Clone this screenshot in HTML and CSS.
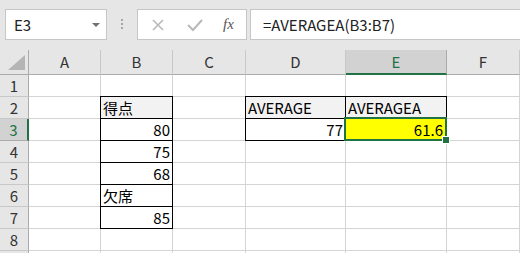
FILE: index.html
```html
<!DOCTYPE html>
<html lang="ja">
<head>
    <title>AVERAGEA</title>
    <meta charset="UTF-8">
    <link rel="stylesheet" href="styles.css">
</head>
<body>
    <div class="toolbar">
        <div class="namebox">
            <span>E3</span>
            <span class="arrow"></span>
        </div>
        <div class="dots"><i></i><i></i><i></i></div>
        <div class="buttons">
            <svg class="btn" width="14" height="14" viewBox="0 0 14 14"><path d="M2 2 L12 12 M12 2 L2 12" stroke="#b9b9b9" stroke-width="1.6" fill="none"/></svg>
            <svg class="btn" width="16" height="14" viewBox="0 0 16 14"><path d="M1 7 L6 12 L15 2" stroke="#b9b9b9" stroke-width="2" fill="none"/></svg>
            <span class="fx">fx</span>
        </div>
        <div class="formula">=AVERAGEA(B3:B7)</div>
    </div>

    <div class="sheet">
        <div class="corner"><span></span></div>
        <div class="colhead">A</div>
        <div class="colhead">B</div>
        <div class="colhead">C</div>
        <div class="colhead">D</div>
        <div class="colhead active">E</div>
        <div class="colhead">F</div>

        <div class="rowhead">1</div>
        <div class="cell"></div><div class="cell"></div><div class="cell"></div><div class="cell"></div><div class="cell"></div><div class="cell"></div>

        <div class="rowhead">2</div>
        <div class="cell"></div>
        <div class="cell boxed title">得点</div>
        <div class="cell"></div>
        <div class="cell boxed title">AVERAGE</div>
        <div class="cell boxed title">AVERAGEA</div>
        <div class="cell"></div>

        <div class="rowhead active">3</div>
        <div class="cell"></div>
        <div class="cell boxed num">80</div>
        <div class="cell"></div>
        <div class="cell boxed num">77</div>
        <div class="cell boxed num selected">61.6</div>
        <div class="cell"></div>

        <div class="rowhead">4</div>
        <div class="cell"></div>
        <div class="cell boxed num">75</div>
        <div class="cell"></div><div class="cell"></div><div class="cell"></div><div class="cell"></div>

        <div class="rowhead">5</div>
        <div class="cell"></div>
        <div class="cell boxed num">68</div>
        <div class="cell"></div><div class="cell"></div><div class="cell"></div><div class="cell"></div>

        <div class="rowhead">6</div>
        <div class="cell"></div>
        <div class="cell boxed">欠席</div>
        <div class="cell"></div><div class="cell"></div><div class="cell"></div><div class="cell"></div>

        <div class="rowhead">7</div>
        <div class="cell"></div>
        <div class="cell boxed num">85</div>
        <div class="cell"></div><div class="cell"></div><div class="cell"></div><div class="cell"></div>

        <div class="rowhead">8</div>
        <div class="cell"></div><div class="cell"></div><div class="cell"></div><div class="cell"></div><div class="cell"></div><div class="cell"></div>

        <div class="rowhead"></div>
        <div class="cell"></div><div class="cell"></div><div class="cell"></div><div class="cell"></div><div class="cell"></div><div class="cell"></div>
    </div>
</body>
</html>
```

FILE: styles.css
```css
* {
    box-sizing: border-box;
}

body {
    margin: 0;
    height: 253px;
    overflow: hidden;
    background: #fff;
    font-family: "Noto Sans CJK JP", "Liberation Sans", sans-serif;
    color: #000;
}

/* formula bar */
.toolbar {
    display: flex;
    align-items: flex-start;
    height: 50px;
    padding: 9px 0 0 5px;
    background: #e6e6e6;
}

.namebox {
    display: flex;
    align-items: center;
    justify-content: space-between;
    width: 102px;
    height: 31px;
    padding: 0 6px 0 8px;
    background: #fff;
    border: 1px solid #c6c6c6;
    font-size: 15px;
    color: #222;
}

.arrow {
    width: 0;
    height: 0;
    border-left: 4px solid transparent;
    border-right: 4px solid transparent;
    border-top: 4px solid #707070;
}

.dots {
    display: flex;
    flex-direction: column;
    gap: 2px;
    margin: 10px 14px 0 14px;
}

.dots i {
    display: block;
    width: 2px;
    height: 2px;
    background: #a6a6a6;
}

.buttons {
    display: flex;
    align-items: center;
    width: 110px;
    height: 31px;
    margin-right: 3px;
    padding-left: 13px;
    background: #fff;
    border: 1px solid #c6c6c6;
}

.btn {
    margin-right: 22px;
}

.fx {
    font-family: "Liberation Serif", serif;
    font-style: italic;
    font-size: 15px;
    color: #555;
    margin-left: -2px;
}

.formula {
    flex: 1;
    height: 31px;
    margin-right: -10px;
    padding-left: 12px;
    background: #fff;
    border: 1px solid #c6c6c6;
    font-size: 15px;
    line-height: 29px;
    color: #222;
}

/* grid */
.sheet {
    display: grid;
    grid-template-columns: 29px 72px 72px 73px 100px 101px 73px;
    grid-template-rows: 25px repeat(9, 22px);
    font-size: 15px;
}

.corner {
    position: relative;
    background: #e6e6e6;
    border-right: 1px solid #ababab;
    border-bottom: 1px solid #ababab;
}

.corner span {
    position: absolute;
    left: 8px;
    top: 5px;
    width: 0;
    height: 0;
    border-left: 17px solid transparent;
    border-bottom: 15px solid #b5b5b5;
}

.colhead {
    background: #e6e6e6;
    border-right: 1px solid #c8c8c8;
    border-bottom: 1px solid #ababab;
    text-align: center;
    line-height: 24px;
    color: #333;
}

.colhead.active {
    background: #d2d2d2;
    color: #217346;
    border-bottom: 2px solid #217346;
    border-right-color: #ababab;
}

.rowhead {
    background: #e6e6e6;
    border-right: 1px solid #ababab;
    border-bottom: 1px solid #c8c8c8;
    text-align: center;
    line-height: 21px;
    color: #333;
}

.rowhead.active {
    background: #d2d2d2;
    color: #217346;
    border-right: 2px solid #217346;
    border-bottom-color: #ababab;
}

.cell {
    border-right: 1px solid #d4d4d4;
    border-bottom: 1px solid #d4d4d4;
    padding: 0 2px;
    line-height: 22px;
    white-space: nowrap;
}

.boxed {
    border-right-color: #000;
    border-bottom-color: #000;
    box-shadow: -1px 0 0 #000, 0 -1px 0 #000, -1px -1px 0 #000;
}

.title {
    background: #f2f2f2;
}

.num {
    text-align: right;
}

.selected {
    position: relative;
    padding-right: 3px;
    background: #ffff00;
}

.selected::after {
    content: "";
    position: absolute;
    left: -2px;
    top: -2px;
    right: -1px;
    bottom: -1px;
    border: 2px solid #217346;
}

.selected::before {
    content: "";
    position: absolute;
    right: -4px;
    bottom: -4px;
    width: 6px;
    height: 6px;
    background: #217346;
    border: 1px solid #fff;
    z-index: 1;
}
```
